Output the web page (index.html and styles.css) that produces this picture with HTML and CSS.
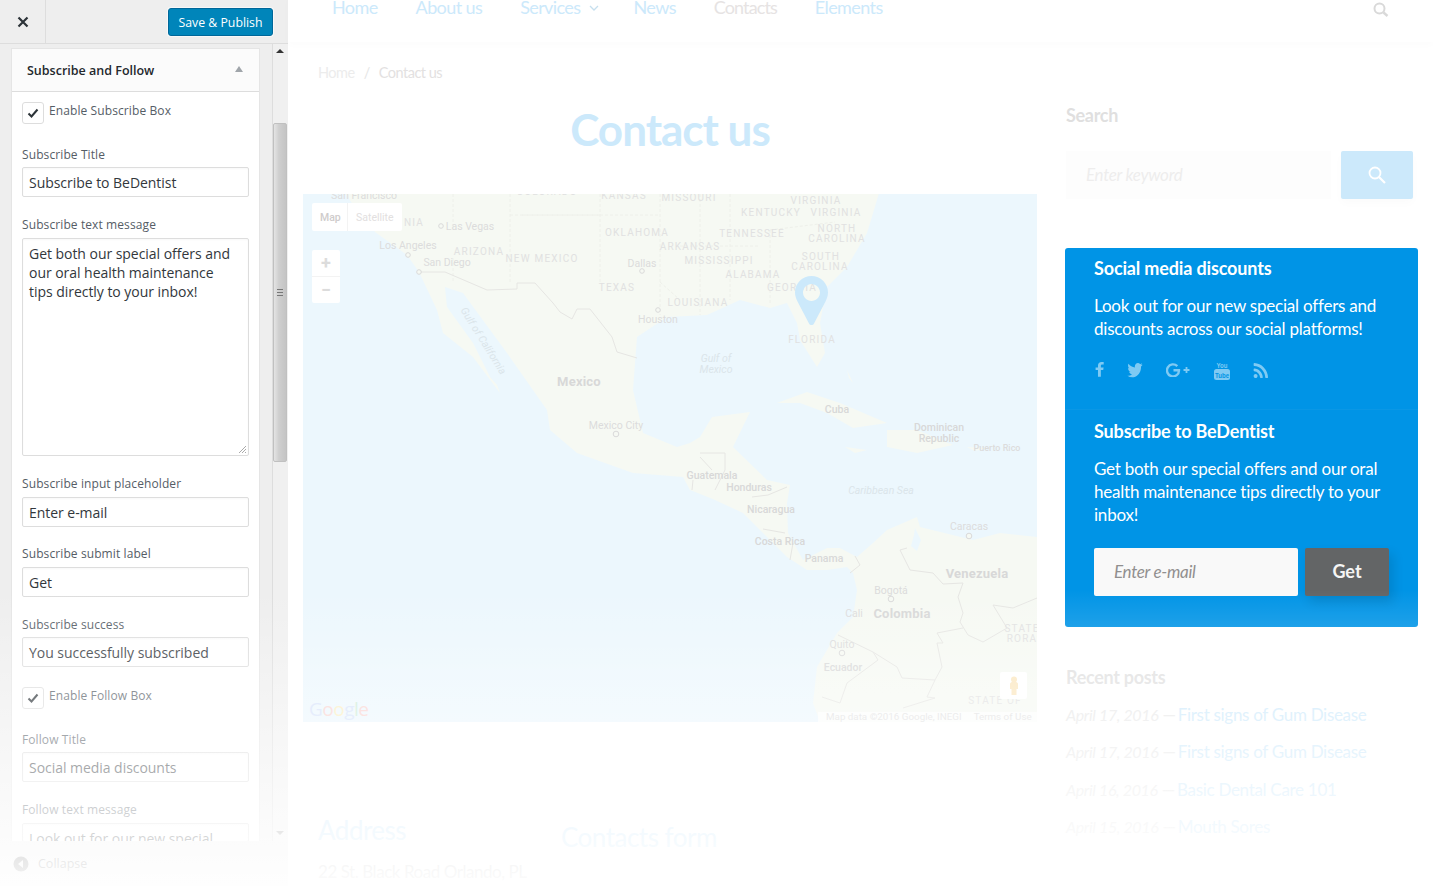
FILE: index.html
```html
<!DOCTYPE html>
<html lang="en">
<head>
<meta charset="UTF-8">
<meta name="viewport" content="width=device-width, initial-scale=1.0">
<title>Customize: Contact us</title>
<link rel="stylesheet" href="styles.css">
</head>
<body>
<div class="shell">

  <!-- customizer panel -->
  <aside class="panel">
    <div class="panel-head">
      <div class="close-btn">
        <svg width="12" height="12" viewBox="0 0 12 12"><path d="M1.500 1.500l9 9M10.500 1.500l-9 9" stroke="#2c3338" stroke-width="2.200" fill="none"/></svg>
      </div>
      <button class="publish-btn" type="button">Save &amp; Publish</button>
    </div>

    <div class="panel-body">
      <div class="panel-scroll">
        <section class="section">
          <div class="section-title">
            <span>Subscribe and Follow</span>
            <span class="caret-up"></span>
          </div>
          <div class="section-content">
            <div class="check-row">
              <span class="checkbox"><svg width="12" height="10" viewBox="0 0 12 10"><path d="M1.500 5.500l3 3 6-7" stroke="#2c3338" stroke-width="2" fill="none"/></svg></span>
              <span class="check-label">Enable Subscribe Box</span>
            </div>
            <label class="field-label">Subscribe Title</label>
            <div class="text-input">Subscribe to BeDentist</div>
            <label class="field-label">Subscribe text message</label>
            <div class="text-area">Get both our special offers and our oral health maintenance tips directly to your inbox!
              <svg class="resize-grip" width="9" height="9" viewBox="0 0 9 9"><path d="M8 1L1 8M8 4L4 8M8 7L7 8" stroke="#aaa" fill="none"/></svg>
            </div>
            <label class="field-label">Subscribe input placeholder</label>
            <div class="text-input">Enter e-mail</div>
            <label class="field-label">Subscribe submit label</label>
            <div class="text-input">Get</div>
            <label class="field-label">Subscribe success</label>
            <div class="text-input">You successfully subscribed</div>
            <div class="check-row check-row-second">
              <span class="checkbox"><svg width="12" height="10" viewBox="0 0 12 10"><path d="M1.500 5.500l3 3 6-7" stroke="#2c3338" stroke-width="2" fill="none"/></svg></span>
              <span class="check-label">Enable Follow Box</span>
            </div>
            <label class="field-label">Follow Title</label>
            <div class="text-input">Social media discounts</div>
            <label class="field-label">Follow text message</label>
            <div class="text-area text-area-cut">Look out for our new special offers and discounts across our social platforms!</div>
          </div>
        </section>
      </div>
      <div class="scrollbar">
        <span class="arrow-up"></span>
        <div class="thumb"><span class="grip"></span></div>
        <span class="arrow-down"></span>
      </div>
    </div>

    <div class="panel-foot">
      <svg width="16" height="16" viewBox="0 0 16 16"><circle cx="8" cy="8" r="7.500" fill="#555"/><path d="M10 4v8L5 8z" fill="#eee"/></svg>
      <span>Collapse</span>
    </div>
  </aside>

  <!-- site preview -->
  <main class="preview">
    <nav class="site-nav">
      <a class="nav-link">Home</a>
      <a class="nav-link">About us</a>
      <a class="nav-link nav-link-drop">Services
        <svg width="10" height="6" viewBox="0 0 10 6"><path d="M1 1l4 4 4-4" stroke="#c6dfee" stroke-width="1.300" fill="none"/></svg>
      </a>
      <a class="nav-link">News</a>
      <a class="nav-link nav-current">Contacts</a>
      <a class="nav-link">Elements</a>
      <svg class="nav-search" width="16" height="15" viewBox="0 0 16 15"><circle cx="6.500" cy="6.500" r="5" stroke="#d9d9d9" stroke-width="2" fill="none"/><path d="M10.500 10.500l4 3.500" stroke="#d9d9d9" stroke-width="2.400"/></svg>
    </nav>

    <div class="page">
      <div class="page-main">
        <div class="crumbs"><span>Home</span><i>/</i><b>Contact us</b></div>
        <h1 class="page-title">Contact us</h1>

        <div class="map">
          <svg class="map-svg" width="734" height="528" viewBox="303 194 734 528">
            <rect class="water" x="303" y="194" width="734" height="528"/>
            <path class="land" d="M343 190L360 215L375 232L407 255L419 272L437 310L443 333L473 357L500 393L497 385L490 377L473 343L447 307L445 287L463 293L507 353L547 410L550 430L577 453L633 473L683 477L690 490L715 500L743 513L763 533L787 557L807 570L827 570L847 567L853 573L857 590L853 617L837 633L817 667L813 703L820 722L1037 722L1037 537L1000 533L973 540L920 527L917 517L887 530L873 543L857 557L840 548L827 548L803 560L788 533L787 503L790 485L767 480L733 447L750 412L712 417L700 437L690 443L677 447L643 433L633 390L637 337L667 317L707 315L740 300L770 308L787 303L797 323L800 340L817 367L825 353L820 323L827 287L847 267L867 233L880 190Z"/>
            <path class="land" d="M777 403L807 392L840 403L887 423L853 428L827 413L800 403Z"/>
            <path class="land" d="M887 430L917 430L953 445L917 453L887 447Z"/>
            <path class="land" d="M845 447L867 450L855 453Z"/>
            <path class="land" d="M967 447L987 448L975 451Z"/>
            <path class="land" d="M847 370L853 383L849 378Z"/>
            <path class="water" d="M915 528L921 540L917 551L911 546L914 535Z"/>

            <path class="state" d="M453 194V230M453 258V282M510 194V282M510 215H660M660 194V315M660 282L680 300M700 194V315M730 194V300M770 230V305M770 230L835 222M680 246H760M600 194V282M600 215H520"/>
            <path class="border" d="M419 272L445 272L487 290L517 289L517 283L535 283L553 303L560 312L572 319L577 309L590 309L612 337L617 352L637 358"/>
            <path class="border" d="M700 453L725 453L725 470M700 457L712 470M693 480L692 490M725 470L715 490M787 487L768 495L752 497M763 529L785 533M793 543L790 560M855 556L860 565L850 573M907 548L900 550L910 570L933 573L943 584L963 583L958 597L963 613L960 622L968 635L983 642L1007 628L993 605L1013 608L1037 598M963 628L937 633L943 643L937 643L942 667L935 680L927 697L935 698L903 708M838 635L873 652L878 660L847 683L840 703L822 697M873 652L897 667L902 678L935 680"/>

            <text class="lb-cap" x="547" y="195" text-anchor="middle">COLORADO</text>
            <text class="lb-cap" x="624" y="199" text-anchor="middle">KANSAS</text>
            <text class="lb-cap" x="689" y="201" text-anchor="middle">MISSOURI</text>
            <text class="lb-cap" x="816" y="204" text-anchor="middle">VIRGINIA</text>
            <text class="lb-cap" x="771" y="216" text-anchor="middle">KENTUCKY</text>
            <text class="lb-cap" x="836" y="216" text-anchor="middle">VIRGINIA</text>
            <text class="lb-cap" x="837" y="232" text-anchor="middle">NORTH</text>
            <text class="lb-cap" x="837" y="242" text-anchor="middle">CAROLINA</text>
            <text class="lb-cap" x="637" y="236" text-anchor="middle">OKLAHOMA</text>
            <text class="lb-cap" x="752" y="237" text-anchor="middle">TENNESSEE</text>
            <text class="lb-cap" x="690" y="250" text-anchor="middle">ARKANSAS</text>
            <text class="lb-cap" x="479" y="255" text-anchor="middle">ARIZONA</text>
            <text class="lb-cap" x="542" y="262" text-anchor="middle">NEW MEXICO</text>
            <text class="lb-cap" x="719" y="264" text-anchor="middle">MISSISSIPPI</text>
            <text class="lb-cap" x="821" y="260" text-anchor="middle">SOUTH</text>
            <text class="lb-cap" x="820" y="270" text-anchor="middle">CAROLINA</text>
            <text class="lb-cap" x="753" y="278" text-anchor="middle">ALABAMA</text>
            <text class="lb-cap" x="617" y="291" text-anchor="middle">TEXAS</text>
            <text class="lb-cap" x="792" y="291" text-anchor="middle">GEORGIA</text>
            <text class="lb-cap" x="698" y="306" text-anchor="middle">LOUISIANA</text>
            <text class="lb-cap" x="812" y="343" text-anchor="middle">FLORIDA</text>
            <text class="lb-cap" x="414" y="226" text-anchor="middle">NIA</text>
            <text class="lb-cap" x="1022" y="632" text-anchor="middle">STATE</text>
            <text class="lb-cap" x="1022" y="642" text-anchor="middle">RORA</text>
            <text class="lb-cap" x="995" y="704" text-anchor="middle">STATE OF</text>

            <text class="lb" x="364" y="199" text-anchor="middle">San Francisco</text>
            <text class="lb" x="470" y="230" text-anchor="middle">Las Vegas</text>
            <text class="lb" x="408" y="249" text-anchor="middle">Los Angeles</text>
            <text class="lb" x="447" y="266" text-anchor="middle">San Diego</text>
            <text class="lb" x="642" y="267" text-anchor="middle">Dallas</text>
            <text class="lb" x="658" y="323" text-anchor="middle">Houston</text>
            <text class="lb" x="616" y="429" text-anchor="middle">Mexico City</text>
            <text class="lb" x="969" y="530" text-anchor="middle">Caracas</text>
            <text class="lb" x="891" y="594" text-anchor="middle">Bogotá</text>
            <text class="lb" x="854" y="617" text-anchor="middle">Cali</text>
            <text class="lb" x="842" y="648" text-anchor="middle">Quito</text>

            <text class="lb-med" x="712" y="479" text-anchor="middle">Guatemala</text>
            <text class="lb-med" x="749" y="491" text-anchor="middle">Honduras</text>
            <text class="lb-med" x="771" y="513" text-anchor="middle">Nicaragua</text>
            <text class="lb-med" x="780" y="545" text-anchor="middle">Costa Rica</text>
            <text class="lb-med" x="824" y="562" text-anchor="middle">Panama</text>
            <text class="lb-med" x="843" y="671" text-anchor="middle">Ecuador</text>
            <text class="lb-med" x="837" y="413" text-anchor="middle">Cuba</text>
            <text class="lb-med" x="939" y="431" text-anchor="middle">Dominican</text>
            <text class="lb-med" x="939" y="442" text-anchor="middle">Republic</text>
            <text class="lb-small" x="997" y="451" text-anchor="middle">Puerto Rico</text>

            <text class="lb-big" x="579" y="386" text-anchor="middle">Mexico</text>
            <text class="lb-big" x="977" y="578" text-anchor="middle">Venezuela</text>
            <text class="lb-big" x="902" y="618" text-anchor="middle">Colombia</text>

            <text class="lb-sea" x="716" y="362" text-anchor="middle">Gulf of</text>
            <text class="lb-sea" x="716" y="373" text-anchor="middle">Mexico</text>
            <text class="lb-sea" x="881" y="494" text-anchor="middle">Caribbean Sea</text>
            <text class="lb-sea" x="483" y="344" text-anchor="middle" transform="rotate(58 483 341)">Gulf of California</text>

            <g class="dots">
              <circle cx="441" cy="226" r="2.300"/><circle cx="408" cy="255" r="2.300"/><circle cx="419" cy="272" r="2.300"/>
              <circle cx="642" cy="271" r="2.300"/><circle cx="658" cy="310" r="2.300"/><circle cx="616" cy="434" r="2.800"/>
              <circle cx="969" cy="536" r="2.800"/><circle cx="891" cy="599" r="2.800"/><circle cx="842" cy="653" r="2.800"/>
            </g>

            <path class="pin" fill-rule="evenodd" d="M811.500 276C802.500 276 795 283.300 795 292.300C795 296 796 298.500 797.500 301.500L809 323.500C810 325.500 813 325.500 814 323.500L825.500 301.500C827 298.500 828 296 828 292.300C828 283.300 820.500 276 811.500 276ZM811.500 284C816 284 820 288 820 292.500C820 297 816 301 811.500 301C807 301 803 297 803 292.500C803 288 807 284 811.500 284Z"/>
          </svg>

          <div class="map-type"><span class="map-type-on">Map</span><span>Satellite</span></div>
          <div class="map-zoom"><span>+</span><span>−</span></div>
          <div class="pegman">
            <svg width="10" height="20" viewBox="0 0 10 20"><circle cx="5" cy="3.500" r="3" fill="#fbe6bd"/><path d="M1 8c0-1 1-2 2-2h4c1 0 2 1 2 2v5H7.500v6h-5v-6H1z" fill="#fbe6bd"/></svg>
          </div>
          <div class="google-mark"><span class="g-b">G</span><span class="g-r">o</span><span class="g-y">o</span><span class="g-b">g</span><span class="g-g">l</span><span class="g-r">e</span></div>
          <div class="map-credit"><span>Map data ©2016 Google, INEGI</span><span>Terms of Use</span></div>
        </div>

        <div class="contact-row">
          <div class="address-col">
            <h2>Address</h2>
            <p>22 St. Black Road Orlando, PL</p>
          </div>
          <div class="form-col">
            <h2>Contacts form</h2>
          </div>
        </div>
      </div>

      <div class="page-side">
        <h3 class="side-title side-title-first">Search</h3>
        <div class="search-row">
          <div class="search-input">Enter keyword</div>
          <div class="search-btn">
            <svg width="18" height="18" viewBox="0 0 18 18"><circle cx="7" cy="7" r="5.500" stroke="#fff" stroke-width="1.800" fill="none"/><path d="M11 11l6 6" stroke="#fff" stroke-width="2.200"/></svg>
          </div>
        </div>

        <div class="promo">
          <div class="promo-part promo-follow">
            <h4>Social media discounts</h4>
            <p>Look out for our new special offers and discounts across our social platforms!</p>
            <div class="social">
              <svg width="9" height="16" viewBox="416 0 960 1792" preserveAspectRatio="none"><path d="M1343 12v264h-157q-86 0-116 36t-30 108v189h293l-39 296h-254v759h-306v-759h-255v-296h255v-218q0-186 104-288.500t277-102.500q147 0 228 12z"/></svg>
              <svg width="16" height="15" viewBox="64 250 1664 1350" preserveAspectRatio="none"><path d="M1684 408q-67 98-162 167 1 14 1 42 0 130-38 259.500t-115.500 248.500-184.500 210.500-258 146-323 54.500q-271 0-496-145 35 4 78 4 225 0 401-138-105-2-188-64.500t-114-159.500q33 5 61 5 43 0 85-11-112-23-185.500-111.500t-73.500-205.500v-4q68 38 146 41-66-44-105-115t-39-154q0-88 44-163 121 149 294.500 238.500t371.500 99.500q-8-38-8-74 0-134 94.500-228.500t228.500-94.500q140 0 236 102 109-21 205-78-37 115-142 178 92-10 184-50z"/></svg>
              <svg class="gplus" width="25" height="14" viewBox="0 0 25 14"><path d="M11.300 3.200A6 6 0 1 0 13 7.300H7.500" stroke-width="2.400"/><path d="M20.500 4v6M17.500 7h6" stroke-width="1.800"/></svg>
              <svg class="yt" width="16" height="19" viewBox="0 0 16 19"><text x="8" y="7" text-anchor="middle" textLength="11" lengthAdjust="spacingAndGlyphs">You</text><rect x="0" y="8" width="16" height="11" rx="2.500"/><text class="yt-tube" x="8" y="16.500" text-anchor="middle" textLength="14" lengthAdjust="spacingAndGlyphs">Tube</text></svg>
              <svg width="15" height="15" viewBox="128 128 1472 1408" preserveAspectRatio="none"><path d="M576 1344q0 80-56 136t-136 56-136-56-56-136 56-136 136-56 136 56 56 136zm512 123q2 28-17 48-18 21-47 21h-135q-25 0-43-16.500t-20-41.500q-22-229-184.500-391.500t-391.500-184.500q-25-2-41.500-20t-16.500-43v-135q0-29 21-47 17-17 43-17h5q160 13 306 80.500t259 181.500q114 113 181.500 259t80.500 306zm512 2q2 27-18 47-18 20-46 20h-143q-26 0-44.500-17.500t-19.500-42.500q-12-215-101-408.500t-231.500-336-336-231.500-408.500-102q-25-1-42.500-19.500t-17.500-43.500v-143q0-28 20-46 18-18 44-18h3q262 13 501.500 120t425.500 294q187 186 294 425.500t120 501.500z"/></svg>
            </div>
          </div>
          <div class="promo-part">
            <h4>Subscribe to BeDentist</h4>
            <p>Get both our special offers and our oral health maintenance tips directly to your inbox!</p>
            <div class="sub-form">
              <div class="sub-input">Enter e-mail</div>
              <div class="sub-btn">Get</div>
            </div>
          </div>
        </div>

        <h3 class="side-title side-title-recent">Recent posts</h3>
        <ul class="recent">
          <li><em>April 17, 2016</em> — <a>First signs of Gum Disease</a></li>
          <li><em>April 17, 2016</em> — <a>First signs of Gum Disease</a></li>
          <li><em>April 16, 2016</em> — <a>Basic Dental Care 101</a></li>
          <li><em>April 15, 2016</em> — <a>Mouth Sores</a></li>
        </ul>
      </div>
    </div>
  </main>

  <!-- white fade over the bottom of the window -->
  <div class="bottom-fade"></div>
</div>
</body>
</html>
```

FILE: styles.css
```css
* {
  box-sizing: border-box;
}

html, body {
  margin: 0;
  height: 100%;
  overflow: hidden;
  background-color: #fff;
}

body {
  font-family: "Lato", sans-serif;
}

.shell {
  position: relative;
  display: flex;
  width: 1433px;
  height: 886px;
  overflow: hidden;
}

.bottom-fade {
  position: absolute;
  left: 0;
  right: 0;
  bottom: 0;
  height: 296px;
  background: linear-gradient(to bottom, rgba(255, 255, 255, 0), rgba(255, 255, 255, 0.95));
  pointer-events: none;
}

/* customizer panel */
.panel {
  display: flex;
  flex-direction: column;
  flex: 0 0 288px;
  height: 886px;
  background-color: #eee;
  font-family: "Open Sans", sans-serif;
  color: #555d66;
}

.panel-head {
  display: flex;
  align-items: center;
  justify-content: space-between;
  flex: 0 0 44px;
  padding-right: 15px;
  border-bottom: 1px solid #ddd;
}

.close-btn {
  display: flex;
  align-items: center;
  justify-content: center;
  width: 46px;
  height: 43px;
  border-right: 1px solid #ddd;
}

.publish-btn {
  width: 105px;
  height: 28px;
  margin-top: 1px;
  padding: 0;
  font-family: inherit;
  font-size: 12.300px;
  color: #fff;
  background-color: #0085ba;
  border: 1px solid #006799;
  border-radius: 3px;
  box-shadow: 0 0 0 1px #f8f8f8;
}

.panel-body {
  display: flex;
  flex: 1;
  min-height: 0;
}

.panel-scroll {
  flex: 0 0 272px;
  padding: 5px 13px 0 12px;
  overflow: hidden;
}

.section {
  width: 247px;
  background-color: #fff;
  box-shadow: 0 0 0 1px #e5e5e5;
}

.section-title {
  display: flex;
  align-items: center;
  justify-content: space-between;
  height: 43px;
  padding: 0 16px 0 15px;
  font-size: 12.500px;
  font-weight: 600;
  color: #23282d;
  background-color: #fbfbfb;
  border-bottom: 1px solid #ddd;
}

.caret-up {
  width: 0;
  height: 0;
  margin-top: -2px;
  border-left: 4.500px solid transparent;
  border-right: 4.500px solid transparent;
  border-bottom: 6px solid #a0a5aa;
}

.section-content {
  padding: 10px 10px 0;
}

.check-row {
  display: flex;
  align-items: flex-start;
  padding-bottom: 2.800px;
}

.check-row-second {
  margin-top: 19.600px;
}

.checkbox {
  display: flex;
  align-items: center;
  justify-content: center;
  flex: 0 0 22px;
  height: 22px;
  background-color: #fff;
  border: 1px solid #ddd;
  border-radius: 3px;
}

.check-label {
  margin: 0 0 0 5px;
  font-size: 12px;
  line-height: 18px;
  letter-spacing: 0.1px;
}

.field-label {
  display: block;
  margin: 18.900px 0 3.500px;
  font-size: 12px;
  line-height: 18px;
  letter-spacing: 0.1px;
}

.text-input, .text-area {
  position: relative;
  width: 227px;
  padding: 0 6px;
  font-size: 14px;
  letter-spacing: -0.04px;
  color: #32373c;
  background-color: #fff;
  border: 1px solid #ddd;
  border-radius: 2px;
  box-shadow: inset 0 1px 2px rgba(0, 0, 0, 0.03);
}

.text-input {
  height: 30px;
  line-height: 29px;
}

.text-area {
  height: 218.600px;
  padding: 5px 14px 0 6px;
  line-height: 19px;
}

.text-area-cut {
  height: 19px;
  overflow: hidden;
}

.resize-grip {
  position: absolute;
  right: 1px;
  bottom: 1px;
}

.scrollbar {
  position: relative;
  flex: 0 0 16px;
  background-color: #f0f0f0;
  border-left: 1px solid #ddd;
}

.arrow-up, .arrow-down {
  position: absolute;
  left: 3px;
  width: 0;
  height: 0;
  border-left: 4px solid transparent;
  border-right: 4px solid transparent;
}

.arrow-up {
  top: 5px;
  border-bottom: 4px solid #333;
}

.arrow-down {
  bottom: 6px;
  border-top: 4px solid #999;
}

.thumb {
  position: absolute;
  top: 79px;
  left: 0;
  display: flex;
  align-items: center;
  justify-content: center;
  width: 14px;
  height: 339px;
  background: linear-gradient(to right, #e4e4e4, #cfcfcf 40%, #c4c4c4);
  border: 1px solid #c0c0c0;
  border-radius: 2px;
}

.grip {
  width: 6px;
  height: 7px;
  background: repeating-linear-gradient(to bottom, #777 0, #777 1px, transparent 1px, transparent 3px);
}

.panel-foot {
  display: flex;
  align-items: center;
  gap: 9px;
  flex: 0 0 45px;
  padding: 0 0 0 13px;
  font-size: 12.500px;
  color: #555;
  background-color: #eee;
}

/* site preview */
.preview {
  flex: 1;
  min-width: 0;
  background-color: #fff;
}

.site-nav {
  display: flex;
  align-items: center;
  gap: 38px;
  height: 46px;
  margin-top: -4px;
  padding: 0 44px 24px;
  box-shadow: 0 3px 8px rgba(0, 0, 0, 0.015);
}

.nav-link {
  font-size: 18px;
  line-height: 22px;
  letter-spacing: -0.6px;
  color: #cce9fb;
}

.nav-link-drop {
  margin-right: -4px;
}

.nav-link-drop svg {
  margin-left: 5px;
  vertical-align: 3px;
}

.nav-current {
  letter-spacing: -0.9px;
  color: #e6e3e3;
}

.nav-search {
  margin: 4px 0 0 auto;
}

.page {
  display: flex;
  gap: 29px;
  padding-left: 15px;
}

.page-main {
  flex: 0 0 734px;
}

.crumbs {
  margin-top: 20px;
  padding-left: 15px;
  font-size: 14.500px;
  line-height: 22px;
  letter-spacing: -0.5px;
  color: #ececec;
}

.crumbs i {
  margin: 0 9px;
  font-style: normal;
  color: #e6e6e6;
}

.crumbs b {
  font-weight: 400;
  color: #e3e1e1;
}

.page-title {
  margin: 20px 0 40px;
  font-size: 44px;
  line-height: 50px;
  font-weight: 700;
  letter-spacing: -1px;
  text-align: center;
  color: #cce9fb;
}

.map {
  position: relative;
  width: 734px;
  height: 528px;
  overflow: hidden;
}

.map-svg {
  display: block;
  font-family: "Roboto", sans-serif;
}

.water {
  fill: #ecf7fd;
}

.land {
  fill: #f6f9f3;
}

.state {
  fill: none;
  stroke: #eef0ea;
  stroke-width: 1;
  stroke-dasharray: 3 2;
}

.border {
  fill: none;
  stroke: #e6e6e3;
  stroke-width: 1;
}

.lb-cap {
  font-size: 10px;
  letter-spacing: 1.200px;
  fill: #e1e1e1;
}

.lb {
  font-size: 10.500px;
  fill: #dcdcdc;
}

.lb-med {
  font-size: 10.500px;
  font-weight: 500;
  fill: #d8d8d8;
}

.lb-small {
  font-size: 9px;
  font-weight: 500;
  fill: #dcdcdc;
}

.lb-big {
  font-size: 13px;
  font-weight: 700;
  letter-spacing: 0.2px;
  fill: #d8d8d8;
}

.lb-sea {
  font-size: 10.500px;
  font-style: italic;
  fill: #dbe5ea;
}

.dots circle {
  fill: #f6f9f3;
  stroke: #dadada;
  stroke-width: 1;
}

.pin {
  fill: #cce9fb;
}

.map-type {
  position: absolute;
  top: 9px;
  left: 9px;
  display: flex;
  height: 28px;
  font-family: "Roboto", sans-serif;
  font-size: 10.500px;
  line-height: 29px;
  color: #e2e0e0;
  background-color: #fff;
  border-radius: 2px;
}

.map-type span {
  padding: 0 8px;
}

.map-type .map-type-on {
  width: 36px;
  color: #cfcccc;
  font-weight: 500;
  border-right: 1px solid #f3f3f3;
}

.map-zoom {
  position: absolute;
  top: 56px;
  left: 9px;
  display: flex;
  flex-direction: column;
  width: 28px;
  height: 53px;
  font-family: "Roboto", sans-serif;
  font-size: 18px;
  font-weight: 700;
  line-height: 26px;
  text-align: center;
  color: #dcdcdc;
  background-color: #fff;
  border-radius: 2px;
}

.map-zoom span:first-child {
  border-bottom: 1px solid #f3f3f3;
}

.pegman {
  position: absolute;
  left: 697px;
  top: 478px;
  display: flex;
  align-items: center;
  justify-content: center;
  width: 27px;
  height: 27px;
  background-color: #fff;
  border-radius: 2px;
}

.google-mark {
  position: absolute;
  left: 6px;
  top: 502px;
  font-family: "Open Sans", sans-serif;
  font-size: 19px;
  line-height: 26px;
  letter-spacing: -0.5px;
}

.g-b { color: #d6e2fa; }
.g-r { color: #f9d2cf; }
.g-y { color: #fbeec0; }
.g-g { color: #cdebd6; }

.map-credit {
  position: absolute;
  right: 0;
  bottom: 0;
  display: flex;
  gap: 12px;
  width: 219px;
  height: 10px;
  padding: 0 6px 0 8px;
  font-family: "Roboto", sans-serif;
  font-size: 9.800px;
  line-height: 10px;
  color: #e0e0e0;
  background-color: rgba(255, 255, 255, 0.7);
  white-space: nowrap;
}

.contact-row {
  display: flex;
}

.address-col {
  flex: 0 0 258px;
  padding-left: 15px;
}

.address-col h2, .form-col h2 {
  margin: 90px 0 0;
  font-size: 26px;
  line-height: 36px;
  font-weight: 400;
  letter-spacing: -0.5px;
  color: #cce9fb;
}

.form-col h2 {
  margin-top: 97px;
}

.address-col p {
  margin: 13px 0 0;
  font-size: 17px;
  line-height: 22px;
  letter-spacing: -0.45px;
  color: #bbb;
  white-space: nowrap;
}

.page-side {
  flex: 0 0 352px;
}

.side-title {
  margin: 0;
  font-size: 18px;
  line-height: 22px;
  font-weight: 700;
  letter-spacing: -0.3px;
  color: #e0dfdf;
}

.side-title-first {
  margin-top: 62px;
}

.side-title-recent {
  margin-top: 39px;
}

.search-row {
  display: flex;
  gap: 10px;
  margin-top: 25px;
}

.search-input {
  flex: 0 0 265px;
  height: 48px;
  padding-left: 20px;
  font-size: 17px;
  line-height: 47px;
  font-style: italic;
  letter-spacing: -0.3px;
  color: #eeeded;
  background-color: #fdfdfd;
}

.search-btn {
  display: flex;
  align-items: center;
  justify-content: center;
  flex: 0 0 72px;
  height: 48px;
  background-color: #cce9fb;
  border-radius: 2px;
  box-shadow: 0 4px 10px rgba(0, 0, 0, 0.02);
}

.promo {
  width: 353px;
  height: 379px;
  margin: 49px 0 0 -1px;
  color: #fff;
  background-color: #0094e6;
  border-radius: 3px;
}

.promo-part {
  padding: 8px 29px 0;
}

.promo-follow {
  height: 162px;
  border-bottom: 1px solid #0a97e5;
}

.promo-part + .promo-part {
  padding-top: 9px;
}

.promo h4 {
  margin: 0;
  font-size: 18px;
  line-height: 24px;
  font-weight: 700;
  letter-spacing: -0.15px;
}

.promo p {
  margin: 14px 0 0;
  font-size: 17px;
  line-height: 23px;
  letter-spacing: -0.22px;
}

.social {
  display: flex;
  align-items: center;
  gap: 23px;
  height: 19px;
  margin-top: 20.500px;
  padding-left: 1px;
  fill: #7fcaf3;
}

.gplus {
  fill: none;
  stroke: #7fcaf3;
}

.yt text {
  font-family: "Liberation Sans", sans-serif;
  font-size: 8px;
  font-weight: 700;
  fill: #7fcaf3;
}

.yt .yt-tube {
  fill: #0094e6;
}

.sub-form {
  display: flex;
  gap: 7px;
  margin-top: 22px;
}

.sub-input {
  flex: 0 0 204px;
  height: 48px;
  padding-left: 20px;
  font-size: 17px;
  line-height: 47px;
  font-style: italic;
  letter-spacing: -0.3px;
  color: #918f8f;
  background-color: #f9f9f9;
  border-radius: 2px;
}

.sub-btn {
  flex: 0 0 84px;
  height: 48px;
  font-size: 18px;
  line-height: 47px;
  font-weight: 700;
  text-align: center;
  color: #f5f5f5;
  background-color: #636566;
  border-radius: 2px;
  box-shadow: 4px 6px 12px rgba(0, 0, 0, 0.12);
}

.recent {
  margin: 16px 0 0;
  padding: 0;
  list-style: none;
}

.recent li {
  height: 37.400px;
  font-size: 17px;
  line-height: 22px;
  letter-spacing: -0.3px;
  color: #e8e8e8;
  white-space: nowrap;
}

.recent em {
  font-size: 16px;
  letter-spacing: -0.35px;
}

.recent a {
  margin-left: -2px;
  color: #cce9fb;
}
```
